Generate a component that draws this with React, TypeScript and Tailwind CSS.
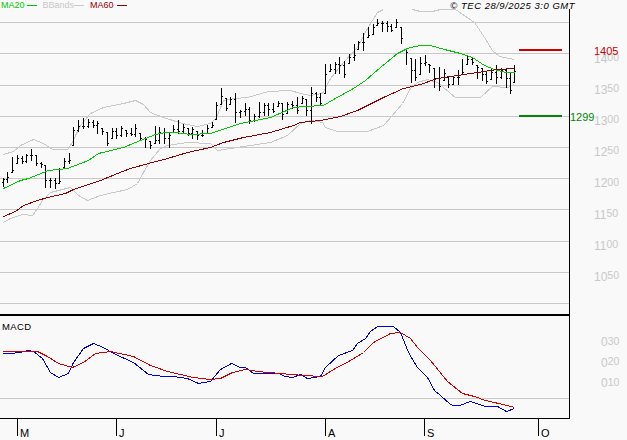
// Stock chart: price panel with MA20 / MA60 / Bollinger bands, MACD panel below.
// All series are in page pixels, so each svg viewBox starts at its panel's page offset.

type Pt = [number, number];

// [x, high y, low y]
const bars: [number, number, number][] = [
  [3, 178, 186], [7, 172, 182], [12, 157, 172], [17, 155, 163], [22, 156, 163], [26, 154, 162],
  [31, 149, 160], [36, 155, 165], [41, 162, 167], [45, 165, 187], [50, 178, 187], [55, 178, 188],
  [59, 168, 183], [64, 158, 167], [69, 153, 163], [73, 127, 145], [78, 120, 131], [83, 118, 128],
  [88, 119, 127], [93, 120, 127], [97, 121, 133], [102, 128, 134], [107, 132, 145], [112, 128, 138],
  [116, 128, 138], [121, 126, 136], [126, 130, 136], [131, 128, 135], [135, 124, 136], [140, 133, 140],
  [145, 137, 147], [150, 141, 148], [155, 126, 143], [159, 127, 143], [164, 128, 143], [169, 133, 147],
  [173, 125, 132], [178, 120, 133], [183, 124, 133], [188, 128, 135], [192, 127, 138], [197, 131, 139],
  [202, 130, 136], [207, 125, 133], [212, 122, 127], [216, 102, 119], [221, 88, 104], [226, 98, 110],
  [230, 97, 104], [235, 93, 122], [240, 110, 117], [245, 103, 115], [249, 107, 123], [254, 114, 121],
  [259, 102, 117], [264, 103, 115], [268, 103, 115], [273, 103, 112], [278, 101, 106], [282, 103, 119],
  [287, 102, 113], [292, 101, 108], [297, 97, 113], [302, 96, 103], [306, 99, 115], [311, 87, 123],
  [316, 92, 101], [320, 93, 105], [325, 64, 93], [330, 64, 71], [335, 62, 73], [339, 57, 73],
  [344, 61, 77], [349, 54, 63], [354, 44, 60], [358, 41, 49], [363, 33, 50], [368, 27, 37],
  [373, 24, 34], [377, 19, 25], [382, 21, 31], [387, 21, 31], [391, 24, 31], [396, 19, 27],
  [401, 27, 43], [406, 49, 64], [411, 58, 82], [415, 59, 80], [420, 57, 74], [425, 55, 65],
  [429, 64, 72], [434, 68, 87], [439, 67, 90], [444, 69, 80], [448, 77, 87], [453, 76, 84],
  [458, 70, 84], [462, 59, 74], [467, 56, 64], [472, 57, 64], [477, 65, 78], [482, 68, 80],
  [486, 71, 83], [491, 68, 79], [496, 65, 83], [501, 68, 78], [506, 68, 87], [510, 73, 93],
  [514, 65, 82],
];

const ma20: Pt[] = [
  [3, 188], [20, 180], [28, 178], [48, 170], [67, 168], [88, 160], [98, 153], [123, 147], [140, 140],
  [155, 134], [165, 132], [175, 132], [190, 134], [210, 133], [240, 123], [270, 117], [293, 107],
  [305, 106], [323, 105], [333, 99], [353, 88], [365, 80], [380, 67], [397, 53], [407, 48], [414, 46],
  [422, 45], [430, 45], [444, 49], [460, 53], [472, 57], [484, 65], [494, 69], [505, 72], [514, 72],
];

const ma60: Pt[] = [
  [3, 216], [15, 211], [23, 205], [37, 200], [47, 197], [65, 193], [73, 189], [88, 184], [100, 180],
  [117, 173], [130, 168], [148, 163], [167, 158], [187, 152], [210, 147], [223, 142], [243, 137],
  [270, 132], [293, 125], [300, 122], [320, 120], [340, 116], [357, 110], [383, 97], [403, 88],
  [420, 84], [437, 78], [457, 75], [477, 72], [497, 69], [514, 68],
];

// upper band leaves the panel at the top around x=385-410, hence two pieces
const bandUpperA: Pt[] = [
  [3, 154], [13, 151], [20, 145], [33, 139], [43, 143], [52, 149], [67, 149], [72, 142], [75, 135],
  [80, 125], [90, 113], [103, 107], [123, 103], [135, 100], [143, 104], [150, 112], [163, 117],
  [182, 123], [197, 126], [210, 123], [216, 117], [223, 100], [235, 98], [247, 97], [268, 91],
  [290, 90], [300, 93], [310, 95], [322, 93], [330, 78], [343, 62], [357, 47], [367, 28], [377, 12],
  [383, 9],
];
const bandUpperB: Pt[] = [
  [412, 9], [420, 11], [432, 11], [440, 9], [455, 9], [474, 22], [484, 37], [492, 50], [499, 56], [514, 59],
];
const bandLower: Pt[] = [
  [3, 222], [10, 218], [22, 214], [32, 215], [37, 208], [42, 200], [50, 192], [70, 187], [78, 195],
  [87, 200], [100, 195], [113, 192], [127, 189], [137, 183], [143, 172], [150, 160], [160, 148],
  [167, 145], [187, 142], [210, 143], [217, 150], [243, 146], [270, 142], [287, 135], [300, 123],
  [310, 120], [322, 122], [325, 127], [337, 131], [367, 131], [383, 125], [392, 115], [402, 103],
  [410, 88], [417, 82], [427, 79], [437, 82], [455, 97], [480, 97], [492, 86], [507, 87], [514, 84],
];

const macdBlue: Pt[] = [
  [2, 353], [10, 353], [20, 352], [27, 350], [33, 351], [42, 358], [50, 372], [58, 377], [68, 373],
  [73, 362], [83, 348], [93, 343], [103, 347], [113, 353], [133, 362], [148, 374], [163, 376],
  [173, 376], [187, 378], [198, 383], [210, 381], [220, 369], [231, 363], [240, 367], [245, 367],
  [253, 373], [278, 373], [285, 376], [292, 377], [300, 374], [307, 378], [320, 376], [325, 367],
  [338, 355], [352, 350], [357, 343], [365, 338], [370, 331], [377, 326], [393, 326], [400, 332],
  [408, 352], [417, 367], [427, 377], [434, 390], [440, 395], [449, 403], [452, 405], [459, 405],
  [470, 401], [485, 406], [497, 406], [506, 411], [514, 408],
];
const macdRed: Pt[] = [
  [2, 351], [37, 351], [47, 356], [58, 363], [72, 367], [83, 362], [95, 353], [110, 351], [133, 356],
  [150, 365], [167, 371], [193, 377], [210, 379], [220, 378], [232, 372], [245, 369], [257, 371],
  [280, 373], [303, 375], [322, 376], [333, 369], [350, 360], [363, 352], [373, 342], [390, 333],
  [400, 332], [410, 338], [417, 347], [430, 360], [447, 381], [462, 393], [474, 396], [485, 400],
  [507, 405], [514, 407],
];

const priceGrid = [22, 53, 85, 116, 147, 178, 209, 241, 272, 303];
const priceAxis = ["1400", "1350", "1300", "1250", "1200", "1150", "1100", "1050"];
const macdAxis = ["30", "20", "10"];
const months = [
  { label: "M", x: 17 },
  { label: "J", x: 116 },
  { label: "J", x: 216 },
  { label: "A", x: 325 },
  { label: "S", x: 424 },
  { label: "O", x: 538 },
];

const toPoints = (pts: Pt[]) => pts.map(([x, y]) => `${x + 0.5},${y + 0.5}`).join(" ");

function Series({ pts, color }: { pts: Pt[]; color: string }) {
  return <polyline points={toPoints(pts)} fill="none" stroke={color} strokeWidth="1" shapeRendering="crispEdges" />;
}

function barPath() {
  let d = "";
  let prevClose = bars[0][1] + 4;
  bars.forEach(([x, high, low], i) => {
    const close = Math.round(high + ((low - high) * ((i * 7) % 5 + 1)) / 6);
    const open = Math.min(low, Math.max(high, prevClose));
    d += `M${x + 0.5} ${high}V${low + 1}M${x - 1} ${open + 0.5}H${x}M${x + 1} ${close + 0.5}H${x + 2}`;
    prevClose = close;
  });
  return d;
}

function Legend({ label, textClass, lineClass, gapClass }: { label: string; textClass: string; lineClass: string; gapClass: string }) {
  return (
    <div className={`flex items-center ${gapClass} ${textClass}`}>
      <span>{label}</span>
      <span className={`h-px w-[10px] ${lineClass}`} />
    </div>
  );
}

export default function App() {
  return (
    <div className="relative h-[440px] w-[627px] overflow-hidden bg-[#f9f9f9] font-['Liberation_Sans',Arial,sans-serif]">
      {/* legend row */}
      <div className="flex h-[9px] w-[575px] items-start justify-between pl-px text-[9px] leading-[10px]">
        <div className="flex items-center gap-[6px]">
          <Legend label="MA20" textClass="text-[#00c800]" lineClass="bg-[#00c800]" gapClass="gap-[2px]" />
          <Legend label="BBands" textClass="text-[#c8c8c8]" lineClass="bg-[#c8c8c8]" gapClass="gap-0" />
          <Legend label="MA60" textClass="text-[#900000]" lineClass="bg-[#900000]" gapClass="gap-[3px]" />
        </div>
        <span className="text-[9.5px] leading-[11px] tracking-[0.5px] italic text-black">© TEC 28/9/2025 3:0 GMT</span>
      </div>

      {/* price panel */}
      <div className="flex h-[307px]">
        <div className="h-full w-[570px] border-r border-b-2 border-black">
          <svg width="569" height="305" viewBox="0 9 569 305" className="block">
            {priceGrid.map((y) => (
              <line key={y} x1="0" x2="569" y1={y + 0.5} y2={y + 0.5} stroke="#c8c8c8" shapeRendering="crispEdges" />
            ))}
            <Series pts={bandUpperA} color="#c8c8c8" />
            <Series pts={bandUpperB} color="#c8c8c8" />
            <Series pts={bandLower} color="#c8c8c8" />
            <path d={barPath()} fill="none" stroke="#000" strokeWidth="1" shapeRendering="crispEdges" />
            <Series pts={ma20} color="#00c800" />
            <Series pts={ma60} color="#900000" />
            <rect x="519" y="49" width="43" height="2" fill="#c80000" />
            <rect x="519" y="115" width="43" height="2" fill="#008800" />
          </svg>
        </div>
        <div className="flex flex-col pl-[24px] pt-[34px] text-[#c8c8c8]">
          {priceAxis.map((label) => (
            <div key={label} className="flex h-[31.2px] items-center leading-none">
              <span className="text-[12px]">{label.slice(0, 2)}</span>
              <span className="-mt-[3px] text-[10.5px]">{label.slice(2)}</span>
            </div>
          ))}
        </div>
      </div>

      {/* MACD panel */}
      <div className="flex h-[103px]">
        <div className="relative h-full w-[570px] border-r border-b border-black">
          <span className="absolute left-[2px] top-[6px] text-[9.5px] leading-[9px] tracking-[0.4px] text-black">MACD</span>
          <svg width="569" height="103" viewBox="0 316 569 103" className="block">
            <line x1="0" x2="569" y1="398.5" y2="398.5" stroke="#c8c8c8" shapeRendering="crispEdges" />
            <Series pts={macdBlue} color="#0000d0" />
            <Series pts={macdRed} color="#d00000" />
          </svg>
        </div>
        <div className="flex flex-col pl-[31px] pt-[16px] text-[#c8c8c8]">
          {macdAxis.map((label) => (
            <div key={label} className="flex h-[20.5px] items-center leading-none">
              <span className="text-[12px]">0</span>
              <span className="-mt-[3px] text-[10.5px]">{label}</span>
            </div>
          ))}
        </div>
      </div>

      {/* month axis */}
      <div className="relative h-[21px] w-[570px]">
        {months.map((m, i) => (
          <div key={i} className="absolute top-0 flex h-[20px] items-end" style={{ left: m.x }}>
            <span className="h-[17px] w-px self-start bg-black" />
            <span className="ml-[2px] text-[11px] leading-[12px] text-black">{m.label}</span>
          </div>
        ))}
      </div>

      {/* target levels */}
      <span className="absolute left-[594px] top-[45px] text-[11px] leading-[12px] text-[#c80000]">1405</span>
      <span className="absolute left-[570px] top-[111px] text-[11px] leading-[12px] text-[#008800]">1299</span>
    </div>
  );
}
